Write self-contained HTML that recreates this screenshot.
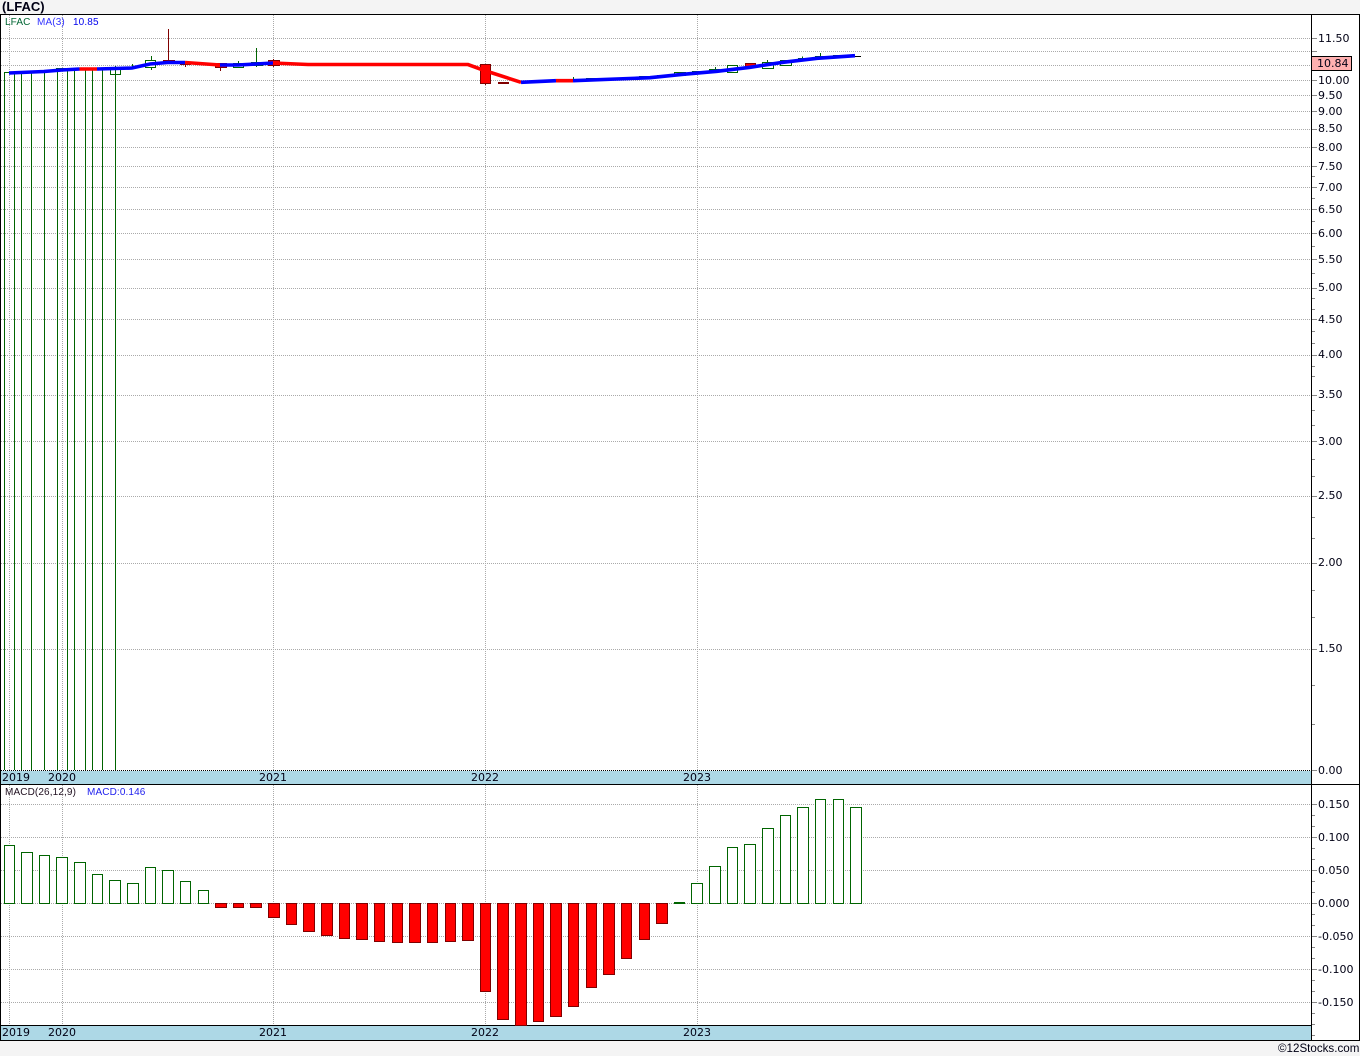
<!DOCTYPE html>
<html><head><meta charset="utf-8"><title>LFAC</title>
<style>
html,body{margin:0;padding:0;background:#f4f4f4;width:1360px;height:1056px;overflow:hidden}
svg{display:block}
text{font-family:"Liberation Sans",sans-serif;fill:#000014}
.a text{font-family:"DejaVu Sans",sans-serif;font-size:11px}
.s{font-size:10px;letter-spacing:.12px}
</style></head><body>
<svg width="1360" height="1056" viewBox="0 0 1360 1056" xmlns="http://www.w3.org/2000/svg">
<rect x="0" y="0" width="1360" height="1056" fill="#f4f4f4"/>
<rect x="0" y="14" width="1360" height="1027" fill="#fff"/>
<g shape-rendering="crispEdges">
<!-- grid -->
<path fill="none" stroke="#aaa" stroke-dasharray="1 1" d="M1 38.5H1311M1 51.5H1311M1 65.5H1311M1 80.5H1311M1 95.5H1311M1 111.5H1311M1 129.5H1311M1 147.5H1311M1 166.5H1311M1 187.5H1311M1 209.5H1311M1 233.5H1311M1 259.5H1311M1 288.5H1311M1 319.5H1311M1 355.5H1311M1 395.5H1311M1 441.5H1311M1 496.5H1311M1 563.5H1311M1 649.5H1311M9.5 15V770M62.5 15V770M273.5 15V770M485.5 15V770M697.5 15V770M1 804.5H1311M1 837.5H1311M1 870.5H1311M1 903.5H1311M1 936.5H1311M1 969.5H1311M1 1002.5H1311M9.5 785V1025M62.5 785V1025M273.5 785V1025M485.5 785V1025M697.5 785V1025"/>
<!-- strips -->
<rect x="1" y="771" width="1310" height="13" fill="#add8e6"/>
<rect x="1" y="1026" width="1310" height="14" fill="#add8e6"/>
<path fill="none" stroke="#000" stroke-dasharray="1 1" d="M1 770.5H1311"/>
<path fill="none" stroke="#000" d="M0 14.5H1360M0 784.5H1360M0 1025.5H1311M0 1040.5H1360M0.5 14V1041M1311.5 14V1041M1359.5 14V1041"/>
<!-- axis ticks -->
<path fill="none" stroke="#888" d="M1312 38.5H1317M1312 51.5H1317M1312 80.5H1317M1312 95.5H1317M1312 111.5H1317M1312 129.5H1317M1312 147.5H1317M1312 166.5H1317M1312 187.5H1317M1312 209.5H1317M1312 233.5H1317M1312 259.5H1317M1312 288.5H1317M1312 319.5H1317M1312 355.5H1317M1312 395.5H1317M1312 441.5H1317M1312 496.5H1317M1312 563.5H1317M1312 649.5H1317M1312 770.5H1317M1312 176.5H1315M1312 198.5H1315M1312 221.5H1315M1312 246.5H1315M1312 273.5H1315M1312 298.5H1315M1312 309.5H1315M1312 331.5H1315M1312 343.5H1315M1312 366.5H1315M1312 376.5H1315M1312 410.5H1315M1312 425.5H1315M1312 459.5H1315M1312 476.5H1315M1312 517.5H1315M1312 538.5H1315M1312 590.5H1315M1312 617.5H1315M1312 685.5H1315M1312 724.5H1315M1312 804.5H1317M1312 837.5H1317M1312 870.5H1317M1312 903.5H1317M1312 936.5H1317M1312 969.5H1317M1312 1002.5H1317M1312 815.5H1315M1312 826.5H1315M1312 848.5H1315M1312 859.5H1315M1312 881.5H1315M1312 892.5H1315M1312 914.5H1315M1312 925.5H1315M1312 947.5H1315M1312 958.5H1315M1312 980.5H1315M1312 991.5H1315M1312 1013.5H1315M1312 1024.5H1315M1312 1035.5H1315"/>
<!-- long price candles -->
<path fill="none" stroke="#006400" d="M4.5 770V72.5H14.5V770M21.5 770V71M31.5 770V71M21.5 71.5H32M44.5 770V70M39 70.5H50M57.5 770V69M67.5 770V69M56 68.5H68M74.5 770V69M85.5 770V69M92.5 770V69M102.5 770V69M115.5 770V66M110.5 68V74.5H120.5V68"/>
<!-- upper green candles -->
<path fill="#fff" stroke="#006400" d="M132.5 64V68M145.5 60.5H155.5V67.5H145.5ZM151.5 56V60M151.5 68V70M233.5 63.5H243.5V67.5H233.5ZM238.5 61V63M251.5 62.5H262.5V65.5H251.5ZM256.5 48V67M573.5 77V81M586 78.5H597M639 76.5H650M657 75.5H667M674.5 72.5H685.5V75.5H674.5ZM692 71.5H702M709 69.5H720M715.5 67V70M727.5 65.5H737.5V72.5H727.5ZM762.5 62.5H773.5V68.5H762.5ZM767.5 60V62M780.5 60.5H791.5V65.5H780.5ZM798 58.5H808.5M802.5 56.5V60M815 56.5H826M820.5 53V58M833 55.5H843"/>
<path fill="#006400" d="M251 62h11v3h-11zM586 78h11v2h-11zM639 76h11v2h-11zM657 75h10v2h-10zM692 71h10v2h-10zM709 69h11v2h-11zM798 58h10v2h-10zM815 56h11v2h-11zM833 55h10v2h-10z"/>
<!-- upper red candles -->
<path fill="#f00" stroke="#800000" d="M168.5 29V60M163.5 60.5H174.5V63.5H163.5ZM180.5 62.5H190.5V64.5H180.5ZM185.5 64V67M215.5 63.5H226.5V67.5H215.5ZM220.5 67V71M268.5 60.5H279.5V65.5H268.5ZM273.5 59V61M273.5 65V67M480.5 64.5H490.5V83.5H480.5ZM485.5 83V85M498.5 82.5H508.5V83.5H498.5ZM745.5 63.5H755.5V67.5H745.5Z"/>
<path fill="none" stroke="#000" d="M855 56.5H861"/>
<!-- MACD positive -->
<path fill="#fff" stroke="#006400" d="M4.5 903.5V845.5H14.5V903.5ZM21.5 903.5V852.5H32.5V903.5ZM39.5 903.5V855.5H49.5V903.5ZM56.5 903.5V857.5H67.5V903.5ZM74.5 903.5V862.5H85.5V903.5ZM92.5 903.5V874.5H102.5V903.5ZM109.5 903.5V880.5H120.5V903.5ZM127.5 903.5V883.5H138.5V903.5ZM145.5 903.5V867.5H155.5V903.5ZM162.5 903.5V870.5H173.5V903.5ZM180.5 903.5V881.5H190.5V903.5ZM198.5 903.5V890.5H208.5V903.5ZM691.5 903.5V883.5H702.5V903.5ZM709.5 903.5V866.5H720.5V903.5ZM727.5 903.5V847.5H737.5V903.5ZM744.5 903.5V844.5H755.5V903.5ZM762.5 903.5V828.5H773.5V903.5ZM780.5 903.5V815.5H790.5V903.5ZM797.5 903.5V807.5H808.5V903.5ZM815.5 903.5V799.5H825.5V903.5ZM833.5 903.5V799.5H843.5V903.5ZM850.5 903.5V807.5H861.5V903.5Z"/>
<rect x="674" y="902" width="11" height="2" fill="#006400"/>
<!-- MACD negative -->
<path fill="#f00" stroke="#800000" d="M215.5 903.5V907.5H226.5V903.5ZM233.5 903.5V907.5H243.5V903.5ZM250.5 903.5V907.5H261.5V903.5ZM268.5 903.5V917.5H279.5V903.5ZM286.5 903.5V924.5H296.5V903.5ZM303.5 903.5V931.5H314.5V903.5ZM321.5 903.5V935.5H332.5V903.5ZM339.5 903.5V938.5H349.5V903.5ZM356.5 903.5V939.5H367.5V903.5ZM374.5 903.5V941.5H384.5V903.5ZM392.5 903.5V942.5H402.5V903.5ZM409.5 903.5V942.5H420.5V903.5ZM427.5 903.5V942.5H437.5V903.5ZM445.5 903.5V941.5H455.5V903.5ZM462.5 903.5V940.5H473.5V903.5ZM480.5 903.5V991.5H490.5V903.5ZM497.5 903.5V1019.5H508.5V903.5ZM515.5 903.5V1025.5H526.5V903.5ZM533.5 903.5V1021.5H543.5V903.5ZM550.5 903.5V1016.5H561.5V903.5ZM568.5 903.5V1006.5H578.5V903.5ZM586.5 903.5V987.5H596.5V903.5ZM603.5 903.5V974.5H614.5V903.5ZM621.5 903.5V958.5H631.5V903.5ZM639.5 903.5V939.5H649.5V903.5ZM656.5 903.5V923.5H667.5V903.5Z"/>
<!-- current price box -->
<rect x="1311.5" y="56.5" width="40" height="14" fill="#ffb0b0" stroke="#000"/>
</g>
<!-- moving average -->
<g fill="none" stroke-width="3.6">
<path stroke="#0000ff" d="M9 73L44 71.5L62 70L79.5 69"/>
<path stroke="#ff0000" d="M79.5 69H97"/>
<path stroke="#0000ff" d="M97 69L132 68L150 64L167.5 62.5H185"/>
<path stroke="#ff0000" d="M185 62.5L220 65"/>
<path stroke="#0000ff" d="M220 65H238L256 64L273 63"/>
<path stroke="#ff0000" d="M273 63L308 64.5H468L483 70L521 82.3"/>
<path stroke="#0000ff" d="M521 82.3L556 80.7"/>
<path stroke="#ff0000" d="M556 80.7H573"/>
<path stroke="#0000ff" d="M573 80.7L650 77.7L683 74.3L717 71.3L750 67.3L783 62.3L817 58.3L855 55.7"/>
</g>
<!-- title -->
<text x="2" y="11" style="font-size:13px;font-weight:bold">(LFAC)</text>
<text class="s" x="5" y="25" style="fill:#063">LFAC</text>
<text class="s" x="37" y="25" style="fill:#3333ff">MA(3)</text>
<text class="s" x="73" y="25" style="fill:#0000ee">10.85</text>
<text class="s" x="5" y="795" style="fill:#201020">MACD(26,12,9)</text>
<text class="s" x="87" y="795" style="fill:#2020ee">MACD:0.146</text>
<!-- axis labels -->
<g class="a">
<text x="1318" y="42">11.50</text>
<text x="1317" y="67">10.84</text>
<text x="1318" y="84">10.00</text>
<text x="1318" y="99">9.50</text>
<text x="1318" y="115">9.00</text>
<text x="1318" y="132">8.50</text>
<text x="1318" y="151">8.00</text>
<text x="1318" y="170">7.50</text>
<text x="1318" y="191">7.00</text>
<text x="1318" y="213">6.50</text>
<text x="1318" y="237">6.00</text>
<text x="1318" y="263">5.50</text>
<text x="1318" y="291">5.00</text>
<text x="1318" y="323">4.50</text>
<text x="1318" y="358">4.00</text>
<text x="1318" y="398">3.50</text>
<text x="1318" y="445">3.00</text>
<text x="1318" y="499">2.50</text>
<text x="1318" y="566">2.00</text>
<text x="1318" y="652">1.50</text>
<text x="1318" y="774">0.00</text>
<text x="1318" y="808">0.150</text>
<text x="1318" y="841">0.100</text>
<text x="1318" y="874">0.050</text>
<text x="1318" y="907">0.000</text>
<text x="1318" y="940">-0.050</text>
<text x="1318" y="973">-0.100</text>
<text x="1318" y="1006">-0.150</text>
<text x="2" y="781">2019</text>
<text x="48" y="781">2020</text>
<text x="259" y="781">2021</text>
<text x="471" y="781">2022</text>
<text x="683" y="781">2023</text>
<text x="2" y="1036">2019</text>
<text x="48" y="1036">2020</text>
<text x="259" y="1036">2021</text>
<text x="471" y="1036">2022</text>
<text x="683" y="1036">2023</text>
</g>
<text x="1278" y="1052" style="font-size:11.6px">©12Stocks.com</text>
</svg>
</body></html>
